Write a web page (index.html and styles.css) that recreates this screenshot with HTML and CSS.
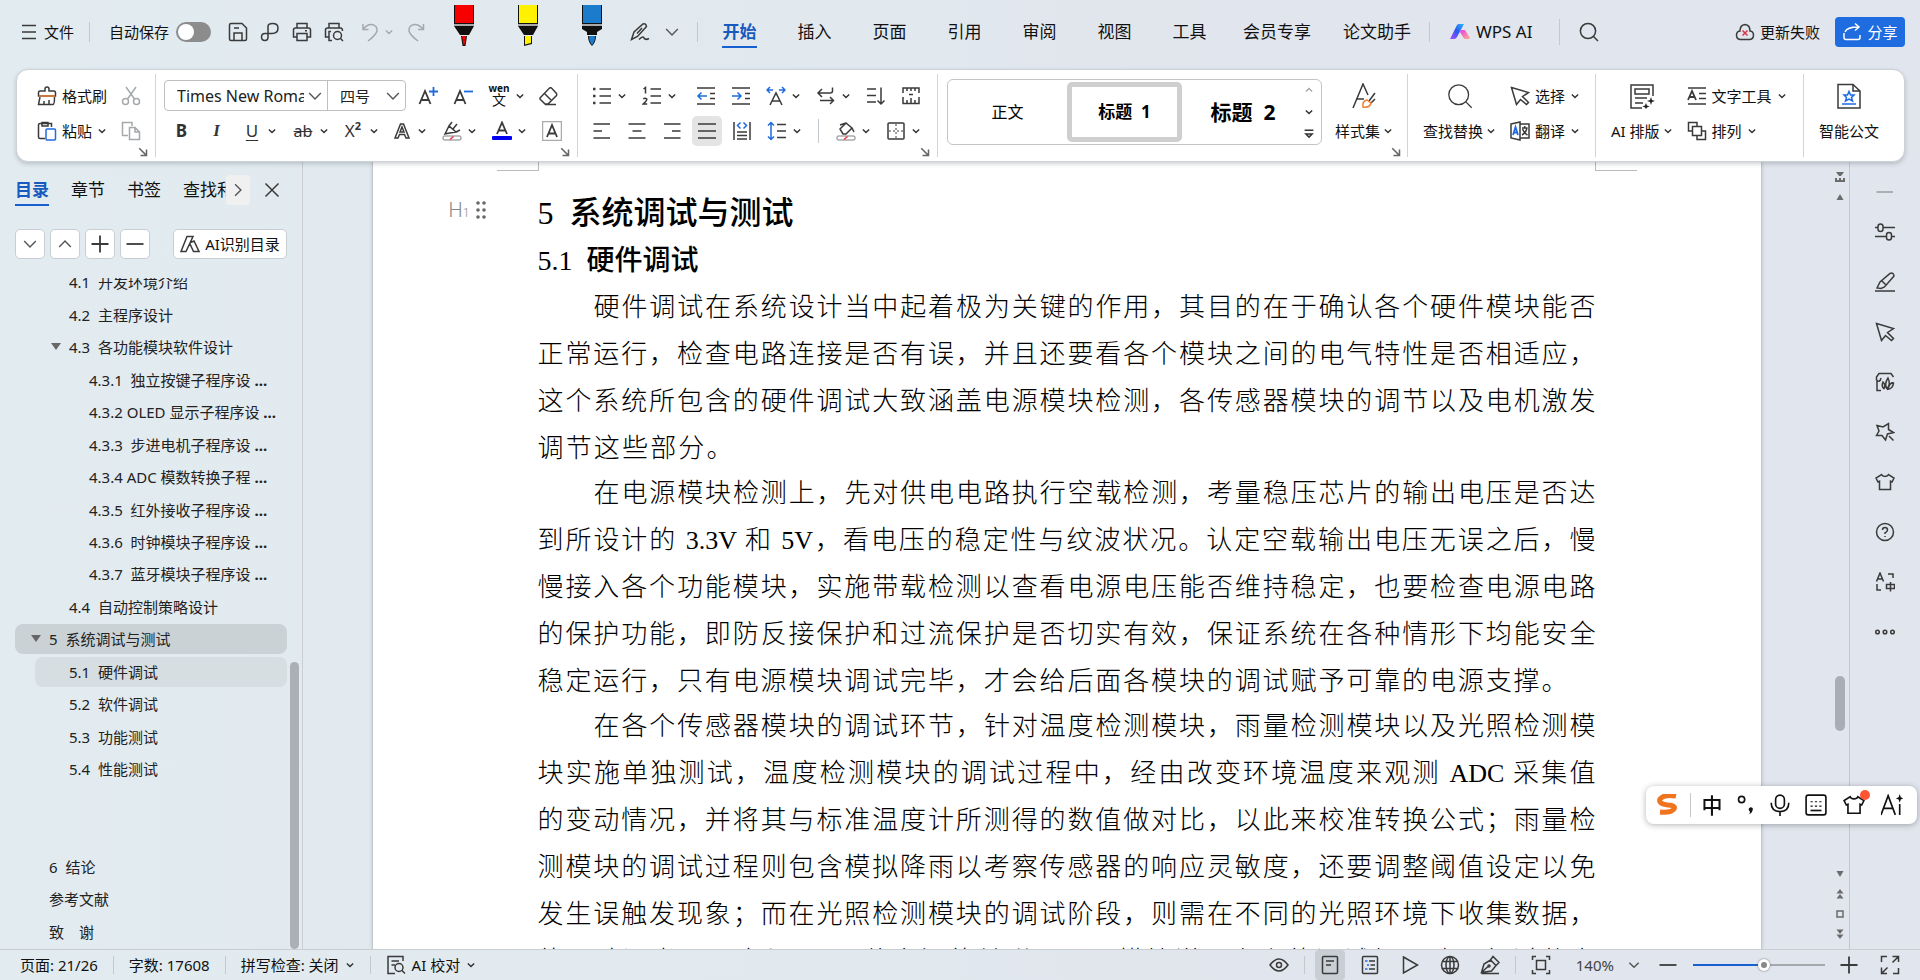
FILE: index.html
```html
<!DOCTYPE html>
<html lang="zh-CN">
<head>
  <meta charset="UTF-8" />
  <meta name="viewport" content="width=device-width, initial-scale=1.0"/>
  <title>WPS 文字</title>
  <link rel="stylesheet" href="styles.css">
</head>
<body>
  <svg class="defs" aria-hidden="true">
    <symbol id="chev" viewBox="0 0 8 8"><path d="M1.5 2.8L4 5.2L6.5 2.8"/></symbol>
    <symbol id="corner" viewBox="0 0 8 8"><path d="M1 1L6.5 6.5M6.8 2V6.8H2"/></symbol>
    <symbol id="search" viewBox="0 0 20 20"><circle cx="9" cy="9" r="7.6"/><path d="M14.5 14.5L19 19"/></symbol>
    <symbol id="cursor" viewBox="0 0 20 20"><path d="M1.5 1.5L18.5 6.5L12.5 10.5L18.5 16.5L16.5 18.5L10.5 13.5L6.5 18.5Z"/></symbol>
    <symbol id="shirt" viewBox="0 0 20 20"><path d="M6.500 2.500C7.500 5 12.500 5 13.500 2.500L19 6L17 10L15.500 9.300V17.500H4.500V9.300L3 10L1 6Z"/></symbol>
  </svg>

  <header class="topbar">
    <button class="file"><svg class="ic" viewBox="0 0 20 20"><path d="M3 3.500H17M3 10H17M3 16.500H17"/></svg>文件</button>
    <span class="bar"></span>
    <label class="autosave">自动保存<input type="checkbox"></label>
    <div class="quick">
      <button aria-label="保存"><svg class="ic" viewBox="0 0 20 20"><path d="M1.500 3Q1.500 1.500 3 1.500H14L18.500 6V17Q18.500 18.500 17 18.500H3Q1.500 18.500 1.500 17ZM6 18V11H14V18M6 6H11"/></svg></button>
      <button aria-label="输出"><svg class="ic" viewBox="0 0 20 20"><path d="M8 16V4.500Q8 1.500 12.500 1.500Q18 1.500 18 6Q18 11.500 12 11.500H5Q1.500 11.500 1.500 15Q1.500 18.500 5 18.500Q8 18.500 8 15"/></svg></button>
      <button aria-label="打印"><svg class="ic" viewBox="0 0 20 20"><path d="M5 6V1.500H15V6M5 15H1.500V8Q1.500 6 3.500 6H16.500Q18.500 6 18.500 8V15H15M5 11.500H15V18.500H5ZM13 8.800H15"/></svg></button>
      <button aria-label="打印预览"><svg class="ic" viewBox="0 0 20 20"><path d="M5 6V1.500H15V6M5 15H1.500V8Q1.500 6 3.500 6H16.500Q18.500 6 18.500 9M7 9.500H5V18.500H8M16.500 16.500L19 19"/><circle cx="13.500" cy="13.500" r="4"/></svg></button>
      <button class="undo" aria-label="撤销"><svg class="ic faint" viewBox="0 0 20 20"><path d="M3 2V7.500H8.500M3 7.500Q7 2 12 2.500Q17.500 3.500 17 9Q16 13 8 19"/></svg><svg class="chev faint"><use href="#chev"/></svg></button>
      <button aria-label="恢复"><svg class="ic faint" viewBox="0 0 20 20"><path d="M17.500 2V7.500H12M17.500 7.500Q13 2 8 2.500Q2.500 3.500 3 9Q4 13 12 19"/></svg></button>
    </div>
    <div class="pens">
      <button aria-label="红色笔"><svg viewBox="0 0 20 42"><path fill="#111" d="M0 0H20V19H0ZM0 21H20L15 30H6ZM7 31H13L11.500 41H8.500Z"/><path fill="#f80000" d="M1 0H19V18H1ZM8 31H12L10.500 40H9.500Z"/><path fill="#aaa" d="M0 19H20V21H0Z"/></svg></button>
      <button aria-label="黄色荧光笔"><svg viewBox="0 0 20 42"><path fill="#111" d="M0 0H20V19H0ZM0 21H20L15 30H6ZM6 31H14V39L6 41Z"/><path fill="#fff200" d="M1 0H19V18H1ZM7 31H13V38L7 39.500Z"/><path fill="#aaa" d="M0 19H20V21H0Z"/></svg></button>
      <button aria-label="蓝色笔"><svg viewBox="0 0 20 42"><path fill="#111" d="M0 0H20V19H0ZM0 21H20V24L15 27V30H5V27L0 24ZM6 31H14Q14 37 10 41Q6 37 6 31Z"/><path fill="#1c7ccc" d="M1 0H19V18H1ZM7 31H13Q13 37 10 40Q7 37 7 31Z"/><path fill="#aaa" d="M0 19H20V21H0Z"/></svg></button>
    </div>
    <div class="quick">
      <button aria-label="画笔"><svg class="ic" viewBox="0 0 20 20"><path d="M1.500 17.500L4 10L13 2Q16 1 16.500 4.500L7.500 14.500ZM12 6L7 11.500M9 17.500Q13 13.500 14 16Q15.500 18.500 19 16.500"/></svg></button>
      <button aria-label="更多画笔"><svg class="ic chevron-big" viewBox="0 0 12 12"><path d="M1 3.500L6 8.500L11 3.500"/></svg></button>
    </div>
    <span class="bar"></span>
    <nav class="menu">
      <a href="#" class="on">开始</a><a href="#">插入</a><a href="#">页面</a><a href="#">引用</a><a href="#">审阅</a><a href="#">视图</a><a href="#">工具</a><a href="#" class="wide">会员专享</a><a href="#" class="wide">论文助手</a>
    </nav>
    <span class="bar"></span>
    <button class="wpsai"><svg viewBox="0 0 20 16"><defs><linearGradient id="g1" x1="0" y1="1" x2="1" y2="0"><stop offset="0" stop-color="#b04dff"/><stop offset=".5" stop-color="#2c58f0"/><stop offset="1" stop-color="#29b8f8"/></linearGradient><linearGradient id="g2" x1="0" y1="0" x2="1" y2="1"><stop offset="0" stop-color="#e83be8"/><stop offset="1" stop-color="#ffb08a"/></linearGradient></defs><path fill="url(#g1)" d="M7 1Q7.500 0 9 0H14L7 13Q6 15 4 15H0Z"/><path fill="url(#g2)" d="M11 6H15L20 14Q20 15 18.500 15H15.500Q14 15 13 13L10 8Z"/></svg>WPS AI</button>
    <span class="bar"></span>
    <button class="find" aria-label="搜索"><svg class="ic"><use href="#search"/></svg></button>
    <div class="account">
      <button class="sync"><svg class="ic" viewBox="0 0 20 20"><path d="M5 17.500Q1.500 17 1.500 13Q1.500 9.500 5 9Q5 3 10 2.500Q15 3 15 9Q18.500 9.500 18.500 13Q18.500 17 15 17.500Z"/><path class="red" d="M7.500 8.500L12.500 13.500M12.500 8.500L7.500 13.500"/></svg>更新失败</button>
      <button class="share"><svg class="ic" viewBox="0 0 20 20"><path d="M2 11V15.500Q2 17.500 4 17.500H16Q18 17.500 18 15.500V13M3 10Q5 5 16 5M13 1.500L17 5L13 8.500"/></svg>分享</button>
    </div>
  </header>

  <section class="ribbon">
    <div class="group clip">
      <div class="row"><button class="cmd"><svg class="ic" viewBox="0 0 20 20"><path d="M8 5V3Q8 1 10 1Q12 1 12 3V5H17Q18.500 5 18.500 7V10H1.500V7Q1.500 5 3 5ZM3 11L1.500 18.500H16Q17.500 18.500 17.500 11M7 18V15M12 18V14"/><path class="orange" d="M2 10H18"/></svg>格式刷</button><button class="tool" aria-label="剪切"><svg class="ic faint" viewBox="0 0 20 20"><path d="M5 1L13.500 13M15 1L6.500 13"/><circle cx="4.500" cy="15.500" r="3"/><circle cx="15.500" cy="15.500" r="3"/></svg></button></div>
      <div class="row"><button class="cmd"><svg class="ic" viewBox="0 0 20 20"><path d="M8 17.500H3Q1.500 17.500 1.500 16V4Q1.500 2.500 3 2.500H14.500V6M5 5V1.500H11V5Z"/><rect class="blue" x="9" y="8" width="9.500" height="11" rx="1"/></svg>粘贴<svg class="chev"><use href="#chev"/></svg></button><button class="tool" aria-label="复制"><svg class="ic faint" viewBox="0 0 20 20"><path d="M7 14.500H1.500V1.500H11V5M8.500 6.500H14L18.500 11V18.500H8.500ZM14 7V11H18"/></svg></button></div>
      <svg class="corner"><use href="#corner"/></svg>
    </div>

    <div class="group font">
      <div class="row">
        <div class="combo">
          <select class="face" aria-label="字体"><option>Times New Roman</option></select>
          <svg class="ic chevron-big" viewBox="0 0 12 12"><path d="M1 3.500L6 8.500L11 3.500"/></svg>
          <select class="size" aria-label="字号"><option>四号</option></select>
          <svg class="ic chevron-big" viewBox="0 0 12 12"><path d="M1 3.500L6 8.500L11 3.500"/></svg>
        </div>
        <button class="tool" aria-label="增大字号"><svg class="ic" viewBox="0 0 20 20"><path class="bold" d="M1.500 18L7 5L12.500 18M3.500 14H10.500"/><path class="blue bold" d="M11 5.500H20M15.500 1V10"/></svg></button>
        <button class="tool" aria-label="减小字号"><svg class="ic" viewBox="0 0 20 20"><path class="bold" d="M1.500 18L7 5L12.500 18M3.500 14H10.500"/><path class="blue bold" d="M11 5.500H20"/></svg></button>
        <button class="tool drop" aria-label="拼音指南"><span class="wen"><b>wen</b><i>文</i></span><svg class="chev"><use href="#chev"/></svg></button>
        <button class="tool" aria-label="清除格式"><svg class="ic" viewBox="0 0 20 20"><path d="M2 12L11.500 2Q12.500 1.500 13.500 2L18.500 7.500Q19 8.500 18.500 9.500L10 18H7L2 13ZM6.500 7.500L13.500 14.500M7 18.500H18"/></svg></button>
      </div>
      <div class="row">
        <button class="tool letter"><b>B</b></button>
        <button class="tool letter"><b class="it">I</b></button>
        <button class="tool drop letter"><span class="un">U</span><svg class="chev"><use href="#chev"/></svg></button>
        <button class="tool drop letter"><span class="st">ab</span><svg class="chev"><use href="#chev"/></svg></button>
        <button class="tool drop letter"><span>X<sup>2</sup></span><svg class="chev"><use href="#chev"/></svg></button>
        <button class="tool drop" aria-label="文字效果"><svg class="ic" viewBox="0 0 20 20"><path d="M3 17L8.500 3H11.500L17 17H14L12.500 13.500H7.500L6 17ZM10 6L12 11H8Z"/></svg><svg class="chev"><use href="#chev"/></svg></button>
        <button class="tool drop" aria-label="突出显示"><svg class="ic" viewBox="0 0 20 20"><path d="M3 13L7 5L14 11L5 12.500ZM7 5L10 1M14 11L18 9M11 8L15 3"/><rect x="1" y="15" width="18" height="4" rx="2" class="grey"/><path class="red" d="M8 18.500L11.500 15.500"/></svg><svg class="chev"><use href="#chev"/></svg></button>
        <button class="tool drop" aria-label="字体颜色"><svg class="ic" viewBox="0 0 20 20"><path class="bold" d="M5 13L10 1.500L15 13M6.500 9.500H13.500"/><rect class="ink" x="0" y="15" width="20" height="4" rx="1"/></svg><svg class="chev"><use href="#chev"/></svg></button>
        <button class="tool" aria-label="字符边框"><svg class="ic" viewBox="0 0 20 20"><rect class="grey" x=".5" y=".5" width="19" height="19"/><path class="bold" d="M5 16L10 4L15 16M6.500 12.500H13.500"/></svg></button>
      </div>
      <svg class="corner"><use href="#corner"/></svg>
    </div>

    <div class="group para">
      <div class="row">
        <button class="tool drop" aria-label="项目符号"><svg class="ic" viewBox="0 0 20 20"><path d="M7.500 3H19M7.500 10H19M7.500 17H19"/><path class="dot" d="M1 3H3.500M1 10H3.500M1 17H3.500"/></svg><svg class="chev"><use href="#chev"/></svg></button>
        <button class="tool drop after" aria-label="编号"><svg class="ic" viewBox="0 0 20 20"><path d="M8.500 3H19M8.500 10H19M8.500 17H19M1.500 3L3.500 1.500V7.500M1.200 13Q3 11.500 4.800 13Q5 14.500 1.200 18H5.200"/></svg><svg class="chev"><use href="#chev"/></svg></button>
        <button class="tool" aria-label="减少缩进"><svg class="ic" viewBox="0 0 20 20"><path d="M1 2H19M14 7.500H19M14 12.500H19M1 18H19"/><path class="blue" d="M2 10H11M5.500 6.500L2 10L5.500 13.500"/></svg></button>
        <button class="tool" aria-label="增加缩进"><svg class="ic" viewBox="0 0 20 20"><path d="M1 2H19M14 7.500H19M14 12.500H19M1 18H19"/><path class="blue" d="M1 10H10M6.500 6.500L10 10L6.500 13.500"/></svg></button>
        <button class="tool drop" aria-label="字符缩放"><svg class="ic" viewBox="0 0 20 20"><path d="M4 19L10 7L16 19M6 15H14"/><path class="blue" d="M1 4H7M4 1L1 4L4 7M19 4H13M16 1L19 4L16 7"/></svg><svg class="chev"><use href="#chev"/></svg></button>
        <button class="tool drop" aria-label="文字方向"><svg class="ic" viewBox="0 0 20 20"><path d="M16.500 1.500V5Q16.500 7 14 7H2M6 3L2 7L6 11M4 14.500H17.500M14 11L17.500 14.500L14 18"/></svg><svg class="chev"><use href="#chev"/></svg></button>
        <button class="tool" aria-label="排序"><svg class="ic" viewBox="0 0 20 20"><path d="M1 3H10M1 9.500H10M1 16H10M15 1.500V18M11.500 14.500L15 18L18.500 14.500"/></svg></button>
        <button class="tool" aria-label="制表位"><svg class="ic" viewBox="0 0 20 20"><path d="M2 7V2H18V7M2 11V17.500H18V11M6 2V5M10 2V5M14 2V5M6 17V14M10 17V12M14 17V14M8 8.500H12"/></svg></button>
      </div>
      <div class="row">
        <button class="tool" aria-label="左对齐"><svg class="ic" viewBox="0 0 20 20"><path d="M1.500 3H18M1.500 10H10M1.500 17H18"/></svg></button>
        <button class="tool" aria-label="居中"><svg class="ic" viewBox="0 0 20 20"><path d="M1.500 3H18.500M5.500 10H14.500M1.500 17H18.500"/></svg></button>
        <button class="tool" aria-label="右对齐"><svg class="ic" viewBox="0 0 20 20"><path d="M2 3H18.500M10 10H18.500M2 17H18.500"/></svg></button>
        <button class="tool pressed" aria-label="两端对齐"><svg class="ic" viewBox="0 0 20 20"><path d="M1 3H19M1 10H19M1 17H19"/></svg></button>
        <button class="tool" aria-label="分散对齐"><svg class="ic" viewBox="0 0 20 20"><path d="M2 1V19M18 1V19M5 11H15M5 14.500H15M5 18H15"/><path class="blue" d="M8.500 1.500L5.500 4.500L8.500 7.500M11.500 1.500L14.500 4.500L11.500 7.500"/></svg></button>
        <button class="tool drop" aria-label="行距"><svg class="ic" viewBox="0 0 20 20"><path d="M10 3.500H19M10 10H19M10 16.500H19"/><path class="blue" d="M4 1.500V18.500M1 4.500L4 1.500L7 4.500M1 15.500L4 18.500L7 15.500"/></svg><svg class="chev"><use href="#chev"/></svg></button>
        <span class="bar"></span>
        <button class="tool drop" aria-label="底纹"><svg class="ic" viewBox="0 0 20 20"><path d="M4 8L10 2L16 7L10 13H7ZM4 4L10 2M16 7L18 11"/><rect x="1" y="15" width="18" height="4" rx="2" class="grey"/><path class="red" d="M8 18.500L11.500 15.500"/></svg><svg class="chev"><use href="#chev"/></svg></button>
        <button class="tool drop" aria-label="边框"><svg class="ic" viewBox="0 0 20 20"><rect x="2" y="2" width="16" height="16" rx="1"/><path class="dash" d="M10 3V17M3 10H17"/></svg><svg class="chev"><use href="#chev"/></svg></button>
      </div>
      <svg class="corner"><use href="#corner"/></svg>
    </div>

    <div class="group styles">
      <div class="gallery">
        <button class="st0">正文</button>
        <button class="st1">标题&nbsp; 1</button>
        <button class="st2">标题&nbsp; 2</button>
        <div class="arrows">
          <svg class="chev faint up"><use href="#chev"/></svg>
          <svg class="chev"><use href="#chev"/></svg>
          <svg class="chev" viewBox="0 0 8 8"><path d="M.5 1H7.500M1.500 4L4 6.500L6.500 4Z"/></svg>
        </div>
      </div>
      <button class="big"><svg class="ic xl" viewBox="0 0 26 26"><path d="M2 25L12 1L17 12M5 16H13M24 10L18 18M24 16L20 20"/><path class="orange" d="M12 24Q11 18 16 17L20 20Q19 25 12 24Z"/></svg><span>样式集<svg class="chev"><use href="#chev"/></svg></span></button>
      <svg class="corner"><use href="#corner"/></svg>
    </div>

    <div class="group edit">
      <button class="big"><svg class="ic xl thin"><use href="#search"/></svg><span>查找替换<svg class="chev"><use href="#chev"/></svg></span></button>
      <div class="stack">
        <div class="row"><button class="cmd"><svg class="ic"><use href="#cursor"/></svg>选择<svg class="chev"><use href="#chev"/></svg></button></div>
        <div class="row"><button class="cmd"><svg class="ic" viewBox="0 0 20 20"><path d="M1 3L10 1V19L1 17ZM10 3H19V17H10M12 7H17.500M14.700 5V7M17 7Q16 12 12 14M12.500 8Q14 12 17.500 14"/><path class="blue bold" d="M3 14L5.500 6L8 14M4 11.500H7"/></svg>翻译<svg class="chev"><use href="#chev"/></svg></button></div>
      </div>
    </div>

    <div class="group arrange">
      <button class="big"><svg class="ic xl" viewBox="0 0 26 26"><path d="M24 13V2H2V25H13M6 6H20V11H6ZM6 15H18M6 20H14"/><path class="fill" d="M22 14L23 17L26 18L23 19L22 22L21 19L18 18L21 17ZM17 20L18 22.500L20.500 23.500L18 24.500L17 26L16 24.500L13.500 23.500L16 22.500Z"/></svg><span>AI 排版<svg class="chev"><use href="#chev"/></svg></span></button>
      <div class="stack">
        <div class="row"><button class="cmd"><svg class="ic" viewBox="0 0 20 20"><path d="M1 2H19M12 7.500H19M12 12.500H19M1 18H19"/><path class="bold" d="M1 14L5 5L9 14M2.500 11H7.500"/></svg>文字工具<svg class="chev"><use href="#chev"/></svg></button></div>
        <div class="row"><button class="cmd"><svg class="ic" viewBox="0 0 20 20"><path d="M5 10H1.500V1.500H10V5M5.500 5.500H14.500V14.500H5.500ZM14.500 10H18.500V18.500H10V14.500"/></svg>排列<svg class="chev"><use href="#chev"/></svg></button></div>
      </div>
    </div>

    <div class="group doc">
      <button class="big"><svg class="ic xl" viewBox="0 0 26 26"><path d="M2 1.500H17L24 8V25H2ZM17 2V8H24"/><path class="blue" d="M13 8.500L14.500 12H18L15.500 14.500L16.500 18L13 16L9.500 18L10.500 14.500L8 12H11.500ZM6 21H20"/></svg><span>智能公文</span></button>
    </div>
  </section>

  <main class="work">
    <aside class="side">
      <div class="side-tabs">
        <a href="#" class="on">目录</a><a href="#">章节</a><a href="#">书签</a><a href="#" class="cut">查找和替换</a>
        <button class="next" aria-label="更多"><svg class="ic chevron-big" viewBox="0 0 12 12"><path d="M3.500 1L8.500 6L3.500 11"/></svg></button>
        <button class="close" aria-label="关闭"><svg class="ic" viewBox="0 0 20 20"><path d="M3.500 3.500L16.500 16.500M16.500 3.500L3.500 16.500"/></svg></button>
      </div>
      <div class="side-tools">
        <button aria-label="展开"><svg class="ic chevron-big" viewBox="0 0 12 12"><path d="M1 3.500L6 8.500L11 3.500"/></svg></button>
        <button aria-label="收起"><svg class="ic chevron-big" viewBox="0 0 12 12"><path d="M1 8.500L6 3.500L11 8.500"/></svg></button>
        <button aria-label="增加"><svg class="ic" viewBox="0 0 20 20"><path class="bold" d="M1.500 10H18.500M10 1.500V18.500"/></svg></button>
        <button aria-label="减少"><svg class="ic" viewBox="0 0 20 20"><path class="bold" d="M1.500 10H18.500"/></svg></button>
        <button class="ai"><svg class="ic" viewBox="0 0 20 20"><path d="M1 17.500L7 2.500H13L6 17.500ZM10.500 8.500L14 7L19 17.500H13.500L10 10M13 2.500L10 9"/></svg>AI识别目录</button>
      </div>
      <div class="tree-wrap">
        <ul class="tree">
          <li class="l2"><a href="#">4.1  开发环境介绍</a></li>
          <li class="l2"><a href="#">4.2  主程序设计</a></li>
          <li class="l2 open"><a href="#">4.3  各功能模块软件设计</a></li>
          <li class="l3"><a href="#">4.3.1  独立按键子程序设 <b>...</b></a></li>
          <li class="l3"><a href="#">4.3.2 OLED 显示子程序设 <b>...</b></a></li>
          <li class="l3"><a href="#">4.3.3  步进电机子程序设 <b>...</b></a></li>
          <li class="l3"><a href="#">4.3.4 ADC 模数转换子程 <b>...</b></a></li>
          <li class="l3"><a href="#">4.3.5  红外接收子程序设 <b>...</b></a></li>
          <li class="l3"><a href="#">4.3.6  时钟模块子程序设 <b>...</b></a></li>
          <li class="l3"><a href="#">4.3.7  蓝牙模块子程序设 <b>...</b></a></li>
          <li class="l2"><a href="#">4.4  自动控制策略设计</a></li>
          <li class="l1 open current"><a href="#">5  系统调试与测试</a></li>
          <li class="l2 hover"><a href="#">5.1  硬件调试</a></li>
          <li class="l2"><a href="#">5.2  软件调试</a></li>
          <li class="l2"><a href="#">5.3  功能测试</a></li>
          <li class="l2"><a href="#">5.4  性能测试</a></li>
          <li></li>
          <li></li>
          <li class="l1"><a href="#">6  结论</a></li>
          <li class="l1"><a href="#">参考文献</a></li>
          <li class="l1"><a href="#">致　谢</a></li>
        </ul>
        <div class="side-scroll"></div>
      </div>
    </aside>

    <div class="canvas">
      <article class="page">
        <div class="crop"><span></span><span></span></div>
        <div class="text">
          <h1><span class="mark"><i>H<small>1</small></i><svg viewBox="0 0 10 20"><g fill="#666"><circle cx="2" cy="3" r="1.800"/><circle cx="8" cy="3" r="1.800"/><circle cx="2" cy="10" r="1.800"/><circle cx="8" cy="10" r="1.800"/><circle cx="2" cy="17" r="1.800"/><circle cx="8" cy="17" r="1.800"/></g></svg></span>5&nbsp; 系统调试与测试</h1>
          <h2>5.1&nbsp; 硬件调试</h2>
          <p>
            <span class="first">硬件调试在系统设计当中起着极为关键的作用，其目的在于确认各个硬件模块能否</span>
            <span>正常运行，检查电路连接是否有误，并且还要看各个模块之间的电气特性是否相适应，</span>
            <span>这个系统所包含的硬件调试大致涵盖电源模块检测，各传感器模块的调节以及电机激发</span>
            <span class="short">调节这些部分。</span>
          </p>
          <p>
            <span class="first">在电源模块检测上，先对供电电路执行空载检测，考量稳压芯片的输出电压是否达</span>
            <span>到所设计的 3.3V 和 5V，看电压的稳定性与纹波状况。认定空载输出电压无误之后，慢</span>
            <span>慢接入各个功能模块，实施带载检测以查看电源电压能否维持稳定，也要检查电源电路</span>
            <span>的保护功能，即防反接保护和过流保护是否切实有效，保证系统在各种情形下均能安全</span>
            <span class="end">稳定运行，只有电源模块调试完毕，才会给后面各模块的调试赋予可靠的电源支撑。</span>
          </p>
          <p>
            <span class="first">在各个传感器模块的调试环节，针对温度检测模块，雨量检测模块以及光照检测模</span>
            <span>块实施单独测试，温度检测模块的调试过程中，经由改变环境温度来观测 ADC 采集值</span>
            <span>的变动情况，并将其与标准温度计所测得的数值做对比，以此来校准转换公式；雨量检</span>
            <span>测模块的调试过程则包含模拟降雨以考察传感器的响应灵敏度，还要调整阈值设定以免</span>
            <span>发生误触发现象；而在光照检测模块的调试阶段，则需在不同的光照环境下收集数据，</span>
            <span>的可验证光照强度与 ADC 值之间的关联是否同模块说明书上的调试相一致，经过仿次</span>
          </p>
        </div>
      </article>
    </div>

    <div class="vscroll">
      <svg viewBox="0 0 10 10"><path d="M1 0H9L6 4H4ZM0 6H2V8H4V6H6V8H8V6H10V10H0Z"/></svg>
      <svg viewBox="0 0 10 10"><path d="M5 2L8.500 8H1.500Z"/></svg>
      <div class="thumb"></div>
      <svg viewBox="0 0 10 10"><path d="M5 8L8.500 2H1.500Z"/></svg>
      <svg viewBox="0 0 10 10"><path d="M5 0L8.500 4.500H1.500ZM5 5L8.500 9.500H1.500Z"/></svg>
      <svg viewBox="0 0 10 10"><path fill="none" stroke="#6b6b6b" stroke-width="1.500" d="M2 2V8H8V2Z"/></svg>
      <svg viewBox="0 0 10 10"><path d="M5 10L8.500 5.500H1.500ZM5 5L8.500 .5H1.500Z"/></svg>
    </div>

    <aside class="rail">
      <button aria-label="折叠"><svg class="ic faint" viewBox="0 0 20 20"><path class="bold" d="M1.500 10H18"/></svg></button>
      <button aria-label="属性"><svg class="ic" viewBox="0 0 20 20"><path d="M0 5.500H3M8 5.500H20M0 14.500H11.500M16.500 14.500H20"/><rect x="3" y="2" width="5" height="7.500" rx="2.500"/><rect x="11.500" y="10.500" width="5" height="7.500" rx="2.500"/></svg></button>
      <button aria-label="书写"><svg class="ic" viewBox="0 0 20 20"><path d="M2 16L5 10L15 1.500Q18.500 0 19 4L9.500 15L6 16.500ZM7 9L11 13M0 19H20"/></svg></button>
      <button aria-label="选择"><svg class="ic"><use href="#cursor"/></svg></button>
      <button aria-label="图库"><svg class="ic" viewBox="0 0 20 20"><path d="M18.500 5L16 1.500H4L1.500 5V8Q5 11 6 6M2 9V18.500H6M9 17Q6 14 8 10Q11 13 9 17M12 17Q9 12 13 6Q16 12 12 17M13 17Q15 10 18.500 11Q18 17 12 17.500"/></svg></button>
      <button aria-label="智能"><svg class="ic" viewBox="0 0 20 20"><path d="M2 3.500L8 5L13.500 1.500L13.500 7.500L18.500 10.500L12.500 12L10.500 18L7 13.500H1.500L4 9ZM14 14L18.500 18.500"/></svg></button>
      <button aria-label="皮肤"><svg class="ic"><use href="#shirt"/></svg></button>
      <button aria-label="帮助"><svg class="ic" viewBox="0 0 20 20"><circle cx="10" cy="10" r="8.500"/><path d="M7.500 8Q7.500 5.500 10 5.500Q12.500 5.500 12.500 8Q12.500 9.500 10 11V12M10 14V15"/></svg></button>
      <button aria-label="全文翻译"><svg class="ic" viewBox="0 0 20 20"><path d="M1.500 9.500L5 1L8.500 9.500M2.500 7H7.500M13 2H18V6M2 12V18H6M11.500 12.500H19.500V16.500H11.500ZM15.500 10V19.500"/></svg></button>
      <button aria-label="更多"><svg class="ic" viewBox="0 0 20 20"><circle cx="2.500" cy="10" r="1.800"/><circle cx="10" cy="10" r="1.800"/><circle cx="17.500" cy="10" r="1.800"/></svg></button>
    </aside>
  </main>

  <footer class="status">
    <span class="item">页面: 21/26</span><span class="bar"></span>
    <span class="item">字数: 17608</span><span class="bar"></span>
    <button class="item">拼写检查: 关闭<svg class="chev"><use href="#chev"/></svg></button><span class="bar"></span>
    <button class="item"><svg class="ic" viewBox="0 0 20 20"><path d="M17 6V1.500H2V18.500H9M5.500 6H13M5.500 10H9"/><circle cx="13" cy="12.500" r="4"/><path d="M16 15.500L19 18.500"/></svg>AI 校对<svg class="chev"><use href="#chev"/></svg></button>
    <div class="views">
      <button aria-label="护眼"><svg class="ic" viewBox="0 0 20 20"><path d="M1 10Q10 -2 19 10Q10 22 1 10Z"/><circle cx="10" cy="10" r="2.500"/></svg></button>
      <span class="bar"></span>
      <button class="pressed" aria-label="页面视图"><svg class="ic" viewBox="0 0 20 20"><rect x="2.500" y="1.500" width="15" height="17" rx="1"/><path d="M6 6H14M6 10H11"/></svg></button>
      <button aria-label="大纲"><svg class="ic" viewBox="0 0 20 20"><rect x="2.500" y="1.500" width="15" height="17" rx="1"/><path d="M9 6H15M10.500 10H15M9 14H15"/><path class="blue" d="M5 6H7.500M7 10H9M5 14H7.500"/></svg></button>
      <button aria-label="阅读"><svg class="ic" viewBox="0 0 20 20"><path d="M3.500 2L17.500 10L3.500 18Z"/></svg></button>
      <button aria-label="网页视图"><svg class="ic" viewBox="0 0 20 20"><circle cx="10" cy="10" r="8.500"/><ellipse cx="10" cy="10" rx="4" ry="8.500"/><path d="M2.500 6.500H17.500M2.500 13.500H17.500M10 1.500V18.500"/></svg></button>
      <button aria-label="写作"><svg class="ic" viewBox="0 0 20 20"><path d="M1.500 17.500L4 9L10.500 5L16 10.500L11.500 16ZM2 17L8 11.500M10.500 5L13 1.500L19 7.500L16 10.500M1.500 18.500H19"/><circle cx="9" cy="11" r="1"/></svg></button>
      <span class="bar"></span>
      <button aria-label="适合页面"><svg class="ic" viewBox="0 0 20 20"><path d="M1.500 5V1.500H5M15 1.500H18.500V5M18.500 15V18.500H15M5 18.500H1.500V15"/><rect x="5.500" y="5.500" width="9" height="9"/></svg></button>
    </div>
    <button class="zoom">140%<svg class="ic chevron-big" viewBox="0 0 12 12"><path d="M2 4L6 8L10 4"/></svg></button>
    <button class="step" aria-label="缩小"><svg class="ic" viewBox="0 0 20 20"><path class="bold" d="M1.500 10H18.500"/></svg></button>
    <input class="slider" type="range" min="0" max="100" value="54" aria-label="缩放">
    <button class="step plus" aria-label="放大"><svg class="ic" viewBox="0 0 20 20"><path class="bold" d="M1.500 10H18.500M10 1.500V18.500"/></svg></button>
    <button class="step" aria-label="全屏"><svg class="ic" viewBox="0 0 20 20"><path d="M1.500 7V1.500H7M12.500 1.500H18.500V7M18 2L12.500 7.500M18.500 13V18.500H13M1.500 12.500V18.500H7M2 18L7.500 12.500"/></svg></button>
  </footer>

  <div class="ime">
    <svg class="sogou" viewBox="0 0 24 22"><path d="M20 2Q8 0 4 5Q2 10 12 11Q20 11.500 18 15Q15 19 4 18" fill="none" stroke="#f0731e" stroke-width="5"/></svg>
    <span class="bar"></span>
    <button class="narrow" aria-label="中文">中</button>
    <button class="narrow" aria-label="标点"><svg class="ic" viewBox="0 0 20 20"><circle cx="6" cy="5" r="2.800"/><path class="fill" d="M14 12Q17 12 16 15Q15.500 17.500 12.500 18.500Q14.500 16.500 13 15.500Q11.500 13 14 12Z"/></svg></button>
    <button class="narrow" aria-label="语音"><svg class="ic" viewBox="0 0 20 20"><rect x="6" y="1" width="8" height="12" rx="4"/><path d="M2 8Q2 16 10 16Q18 16 18 8M10 16V20"/></svg></button>
    <button aria-label="键盘"><svg class="ic" viewBox="0 0 20 20"><rect x="1" y="1" width="18" height="18" rx="2"/><path d="M5 15H15"/><path class="dash" d="M5 7H16M5 11H16"/></svg></button>
    <button class="skin" aria-label="换肤"><svg class="ic"><use href="#shirt"/></svg></button>
    <button aria-label="AI"><svg class="ic" viewBox="0 0 20 20"><path d="M0 19L6.500 1.500L13 19M2.500 13H10.500M17 9V19"/><path class="fill" d="M17 0L18 3L20.500 4L18 5L17 8L16 5L13.500 4L16 3Z"/></svg></button>
  </div>
</body>
</html>
```

FILE: styles.css
```css
* { box-sizing: border-box; }
html, body { height: 100%; }
body {
  margin: 0;
  display: flex;
  flex-direction: column;
  overflow: hidden;
  font: 15px/20px "Noto Sans", "Noto Sans CJK SC", sans-serif;
  color: #111;
  background: linear-gradient(90deg, #e2ebf0 0%, #e1e9ef 40%, #e1e5ed 65%, #e1e5ed 100%);
}
a { color: inherit; text-decoration: none; }
button { font: inherit; color: inherit; background: none; border: 0; padding: 0; display: flex; align-items: center; justify-content: center; white-space: nowrap; }
.defs { position: absolute; width: 0; height: 0; }

/* icons */
.ic { width: 20px; height: 20px; flex: none; fill: none; stroke: #3a3a3a; stroke-width: 1.5; }
.chev, .corner { width: 10px; height: 10px; flex: none; fill: none; stroke: #333; stroke-width: 1.2; }
.chevron-big { width: 14px; height: 14px; stroke: #555; stroke-width: 1.2; }
.faint { stroke: #a5a9ac; }
.blue { stroke: #1f6be0; }
.orange { stroke: #ed7d31; }
.red { stroke: #dc3545; }
.grey { stroke: #aaa; }
.bold { stroke-width: 1.8; }
.dot { stroke-width: 2.6; }
.fill { fill: #222; stroke: none; }
.ink { fill: #0000f0; stroke: none; }
.dash { stroke-dasharray: 2 2; stroke-width: 1; }
.bar { width: 1px; height: 20px; background: #c4c9ce; flex: none; }

/* top bar */
.topbar { display: flex; align-items: center; height: 64px; padding: 0 15px 0 19px; margin-bottom: 5px; flex: none; }
.file { gap: 5px; width: 70px; justify-content: flex-start; }
.file .ic { stroke-width: 1.4; }
.autosave { display: flex; align-items: center; gap: 7px; margin: 0 11px 0 19px; }
.autosave input { appearance: none; margin: 0; width: 35px; height: 20px; border-radius: 10px; background: #8c8c8c; padding: 2px; }
.autosave input::before { content: ""; display: block; width: 16px; height: 16px; border-radius: 50%; background: #fff; }
.quick, .pens, .menu { display: flex; align-items: center; }
.quick button { width: 32px; height: 32px; }
.quick .undo { width: 50px; padding-left: 4px; gap: 4px; }
.pens { align-self: flex-start; padding-top: 5px; }
.pens button { width: 64px; }
.pens svg { width: 20px; height: 42px; }
.quick + .bar { margin: 0 4px 0 9px; }
.menu { font-size: 17px; }
.menu a { width: 75px; text-align: center; }
.menu .wide { width: 100px; }
.on { color: #185abd; font-weight: bold; }
.menu .on { display: flex; flex-direction: column; align-items: center; }
.menu .on::after { content: ""; width: 35px; height: 2px; margin: 4px 0 -6px; background: #185fd0; }
.menu + .bar { margin: 0 20px 0 2px; }
.wpsai { gap: 6px; font-size: 17px; margin-right: 26px; }
.wpsai svg { width: 20px; height: 16px; }
.wpsai + .bar { height: 26px; }
.find { margin-left: 19px; }
.account { display: flex; align-items: center; gap: 15px; margin-left: auto; }
.sync { gap: 5px; }
.share { width: 70px; height: 30px; gap: 5px; border-radius: 4px; background: #1f6be0; color: #fff; }
.share .ic { stroke: #fff; }

/* ribbon */
.ribbon { position: relative; z-index: 2; display: flex; height: 93px; margin: 0 15px 0 16px; padding: 4px 0; flex: none; background: #fff; border: 1px solid #cdd2d7; border-radius: 12px; box-shadow: 0 2px 4px rgba(60, 70, 80, .25); }
.group { position: relative; height: 83px; padding: 4px 8px; border-right: 1px solid #d4d4d4; flex: none; }
.group .corner { position: absolute; right: 7px; bottom: 0; stroke: #666; }
.row { display: flex; align-items: center; height: 35px; }
.cmd { gap: 5px; }
.tool { width: 35px; height: 30px; flex: none; border-radius: 5px; }
.tool.drop { width: 50px; padding-left: 8px; gap: 5px; justify-content: flex-start; }
.pressed { background: #e4e4e4; }
.tool.pressed { width: 30px; margin: 0 2px 0 3px; }
.clip { width: 139px; padding-left: 20px; }
.clip .row { justify-content: space-between; }
.clip .tool { margin-right: -1px; }
.font { width: 422px; padding-left: 8px; }
.combo { display: flex; align-items: center; width: 242px; height: 31px; margin-right: 4px; border: 1px solid #bfbfbf; border-radius: 4px; flex: none; }
.combo select { appearance: none; border: 0; background: none; font: inherit; height: 29px; padding: 0 0 0 12px; color: #222; }
.combo .face { width: 139px; margin-right: 4px; font-size: 16px; }
.combo .size { width: 59px; margin-left: 5px; border-left: 1px solid #bfbfbf; }
.letter { font-size: 17px; color: #333; }
.letter b { font-weight: bold; }
.letter .it { font-style: italic; font-family: "Liberation Serif", serif; }
.letter span { width: 22px; text-align: center; }
.letter .st { text-decoration: line-through; font-size: 16px; }
.letter .un { text-decoration: underline; text-underline-offset: 3px; width: 20px; }
.letter sup { font-size: 11px; line-height: 0; font-weight: bold; }
.wen { display: flex; flex-direction: column; width: 22px; font-size: 14px; line-height: 14px; text-align: center; }
.wen b { font-size: 10px; line-height: 9px; }
.wen i { font-style: normal; }
.para { width: 360px; padding-left: 6px; }
.para .after { margin-right: 4px; }
.para .bar { margin: 0 9px; height: 24px; }
.styles { display: flex; align-items: flex-start; width: 470px; padding-left: 9px; }
.gallery { display: flex; align-items: center; width: 375px; height: 66px; margin-top: 1px; border: 1px solid #c4c4c4; border-radius: 6px; font-size: 16px; color: #000; flex: none; }
.st0 { width: 119px; }
.st1 { width: 115px; height: 60px; border: 5px solid #cfcfcf; border-radius: 5px; font-weight: bold; font-size: 17px; }
.st2 { width: 122px; font-weight: bold; font-size: 21px; }
.arrows { display: flex; flex-direction: column; gap: 12px; }
.up { transform: rotate(180deg); }
.big { flex-direction: column; justify-content: flex-start; height: 70px; gap: 12px; padding-top: 5px; }
.big span { display: flex; align-items: center; gap: 3px; }
.big .ic.xl { width: 26px; height: 26px; }
.thin { stroke-width: 1; }
.styles .big { margin-left: 13px; }
.styles .corner { right: 6px; }
.edit { display: flex; width: 188px; padding-left: 15px; }
.stack { margin-left: 14px; }
.arrange { display: flex; width: 208px; padding-left: 15px; }
.doc { border: 0; padding-left: 15px; }

/* work area */
.work { flex: 1; min-height: 0; display: flex; }
.side { width: 303px; flex: none; display: flex; flex-direction: column; border-right: 1px solid #c9cdd0; }
.side-tabs { display: flex; align-items: center; height: 56px; padding-left: 15px; font-size: 17px; flex: none; }
.side-tabs a { margin-right: 22px; padding: 5px 0 4px; border-bottom: 2px solid transparent; white-space: nowrap; }
.side-tabs .on { border-color: #185fd0; }
.side-tabs .cut { width: 43px; margin-right: 0; overflow: hidden; }
.next { width: 24px; height: 30px; border-radius: 4px; background: #f0f0f0; }
.close { margin-left: 12px; }
.side-tools { display: flex; gap: 5px; height: 60px; padding: 11px 0 0 15px; flex: none; }
.side-tools button { width: 30px; height: 30px; background: #fff; border: 1px solid #c8ced2; border-radius: 5px; }
.side-tools .ai { width: 114px; margin-left: 18px; gap: 5px; }
.tree-wrap { flex: 1; min-height: 0; display: flex; overflow: hidden; }
.tree { flex: 1; display: flex; flex-direction: column; list-style: none; margin: -12px 0 0; padding: 0 3px 1px 15px; white-space: pre; color: #222; }
.tree li { position: relative; flex: 1; min-height: 30px; display: flex; align-items: center; }
.tree a { flex: 1; height: 30px; line-height: 30px; border-radius: 8px; }
.l1 a { padding-left: 34px; }
.l2 a { padding-left: 34px; margin-left: 20px; }
.l3 a { padding-left: 34px; margin-left: 40px; }
.current a { background: #cbd2d6; }
.hover a { background: #d7dee2; }
.open a::before { content: ""; position: absolute; margin: 11px 0 0 -18px; border: 5px solid transparent; border-top: 7px solid #666; border-bottom: 0; }
.side-scroll { width: 9px; margin: 384px 3px 0 0; border-radius: 5px; background: #a9b1b4; }

.canvas { flex: 1; min-width: 0; overflow: hidden; }
.page { max-width: 1390px; height: 100%; margin: 0 auto; padding: 0 124px; background: #fff; border: solid #c3c6ca; border-width: 0 1px; box-shadow: 0 0 4px rgba(0, 0, 0, .15); }
.crop { display: flex; justify-content: space-between; height: 9px; }
.crop span { width: 42px; border: solid #bbb; border-width: 0 1px 1px 0; }
.crop span + span { border-width: 0 0 1px 1px; }
.text { padding: 18px 41px 0; font-family: "Liberation Serif", "Noto Sans CJK SC", serif; font-size: 26px; color: #000; }
.text h1 { position: relative; margin: 0; font-size: 32px; line-height: 48px; font-weight: 500; }
.text h2 { margin: 0; font-size: 28px; line-height: 47px; font-weight: 500; }
.text p { margin: 0; line-height: 47px; font-weight: 300; }
.text p + p { margin-top: -2px; }
.text p span { display: block; height: 47px; text-align: justify; text-align-last: justify; white-space: nowrap; }
.text .first { padding-left: 56px; }
.text .short { width: 195px; }
.text .end { padding-right: 28px; }
.mark { position: absolute; left: -89px; top: 0; display: flex; align-items: center; gap: 6px; height: 42px; font: 300 20px "Roboto", sans-serif; color: #888; }
.mark i { font-style: normal; }
.mark small { font-size: 12px; }
.mark svg { width: 12px; height: 20px; }

.vscroll { width: 19px; flex: none; display: flex; flex-direction: column; align-items: center; gap: 10px; padding: 10px 0; }
.vscroll svg { width: 10px; height: 10px; fill: #6b6b6b; flex: none; }
.thumb { width: 10px; height: 55px; margin: auto 0; border-radius: 5px; background: #a9adb5; position: relative; top: 168px; }
.rail { width: 71px; flex: none; border-left: 1px solid #c4c8ce; padding-top: 15px; }
.rail button { width: 70px; height: 50px; }
.rail button:first-child { height: 30px; }

/* status bar */
.status { display: flex; align-items: center; height: 31px; flex: none; padding: 0 20px; border-top: 1px solid #c9cdd0; }
.status .bar { height: 18px; }
.item { padding-right: 15px; gap: 6px; white-space: nowrap; }
.bar + .item { padding-left: 15px; }
.views { display: flex; align-items: center; margin-left: auto; }
.views button { width: 30px; height: 30px; margin: 0 5px; border-radius: 4px; }
.views .bar { margin: 0 5px; }
.views .pressed { background: #c9cdd4; }
.zoom { gap: 13px; margin-left: 15px; color: #444; }
.step { width: 20px; margin-left: 17px; }
.slider { appearance: none; width: 132px; height: 14px; margin: 0 0 0 15px; background: linear-gradient(90deg, #185fd0 54%, #a5a9ac 54%) center / 100% 2px no-repeat; }
.slider::-webkit-slider-thumb { appearance: none; width: 12px; height: 12px; border: 3px solid #fff; border-radius: 50%; background: #888; box-shadow: 0 0 2px #666; }
.plus { margin: 0 4px 0 14px; }

/* input method bar */
.ime { position: fixed; right: 3px; bottom: 156px; z-index: 3; display: flex; align-items: center; width: 271px; height: 38px; padding-left: 10px; background: #fff; border-radius: 8px; box-shadow: 0 1px 6px rgba(0, 0, 0, .3); }
.ime button { width: 38px; flex: none; font-size: 21px; font-weight: 500; }
.ime .narrow { width: 34px; }
.ime .ic { width: 22px; height: 22px; stroke: #111; }
.ime .fill { fill: #111; }
.sogou { width: 24px; height: 22px; flex: none; }
.ime .bar { height: 24px; margin: 0 4px 0 10px; }
.skin { position: relative; }
.skin::after { content: ""; position: absolute; top: -4px; right: 3px; width: 10px; height: 10px; border-radius: 50%; background: #ff5533; }
```
